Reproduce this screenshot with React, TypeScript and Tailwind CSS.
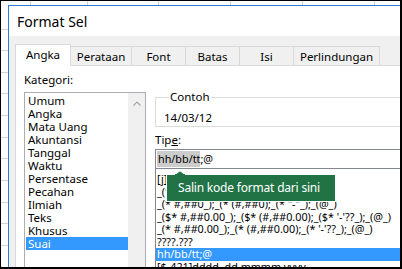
import React from "react";

const categories = [
  "Umum",
  "Angka",
  "Mata Uang",
  "Akuntansi",
  "Tanggal",
  "Waktu",
  "Persentase",
  "Pecahan",
  "Ilmiah",
  "Teks",
  "Khusus",
  "Suai",
];

const formats = [
  "[j]:mm:dd",
  "_(* #,##0_);_(* (#,##0);_(* \"-\"_)",
  "_(* #,##0_);_(* (#,##0);_(* \"-\"_);_(@_)",
  "_($* #,##0.00_);_($* (#,##0.00);_($* '-'??_);_(@_)",
  "_(* #,##0.00_);_(* (#,##0.00);_(* '-'??_);_(@_)",
  "????.???",
  "hh/bb/tt;@",
  "[$-421]dddd, dd mmmm yyyy",
];

const tabs = [
  { label: "Perataan", w: "w-[61px]" },
  { label: "Font", w: "w-[54px]" },
  { label: "Batas", w: "w-[54px]" },
  { label: "Isi", w: "w-[54px]" },
  { label: "Perlindungan", w: "w-[86px]" },
];

function Grid() {
  const vx = [30.5, 87.5, 158.5, 230.5, 302.5, 374.5];
  const hy = [29.5, 50.5, 72.5, 93.5, 115.5, 137.5, 158.5, 180.5, 202.5, 223.5, 245.5, 267.5];
  return (
    <svg className="absolute inset-0" width="402" height="269">
      {vx.map((x) => (
        <line key={"v" + x} x1={x} y1={0} x2={x} y2={269} stroke="#d4d4d4" strokeWidth="1" />
      ))}
      {hy.map((y) => (
        <line key={"h" + y} x1={0} y1={y} x2={402} y2={y} stroke="#d4d4d4" strokeWidth="1" />
      ))}
    </svg>
  );
}

export default function App() {
  return (
    <div className="relative w-[402px] h-[269px] overflow-hidden bg-white font-['Noto_Sans',sans-serif] text-black">
      <Grid />

      {/* Dialog window */}
      <div className="absolute left-[8px] top-[5px] w-[420px] border-l border-t border-[#2d7dd2] bg-[#f0f0f0] flex flex-col">
        <div className="shrink-0 h-[30px] bg-white flex items-center pl-[8px] text-[14px]">Format Sel</div>

        <div className="shrink-0 pt-[8px] pl-[6px]">
          {/* Tabs */}
          <div className="flex items-end h-[22px] text-[11.5px]">
            <div className="relative z-10 w-[56px] h-[22px] bg-white border border-b-0 border-[#d9d9d9] flex items-center justify-center pb-[1px]">
              Angka
            </div>
            {tabs.map((t) => (
              <div
                key={t.label}
                className={`${t.w} h-[20px] border border-l-0 border-b-0 border-[#d9d9d9] bg-[#f0f0f0] flex items-center justify-center`}
              >
                {t.label}
              </div>
            ))}
          </div>

          {/* Panel */}
          <div className="relative -mt-[1px] h-[260px] bg-white border border-[#d9d9d9] flex pl-[8px] gap-[9px]">
            {/* Left column */}
            <div className="shrink-0 flex flex-col w-[122px] text-[11.5px]">
              <div className="mt-[6px] h-[16px] leading-[16px]">
                Kate<span className="underline">g</span>ori:
              </div>
              <div className="mt-[4px] h-[220px] border border-[#abadb3] bg-white flex">
                <div className="flex-1 ml-[1px] pt-[1px]">
                  {categories.map((c) => (
                    <div
                      key={c}
                      className={`h-[13px] leading-[13px] pl-[2px] ${c === "Suai" ? "bg-[#3399ff] text-white" : ""}`}
                    >
                      {c}
                    </div>
                  ))}
                </div>
                <div className="w-[17px] bg-[#f0f0f0] flex justify-center pt-[8px]">
                  <svg width="8" height="5" viewBox="0 0 8 5">
                    <path d="M0.5 4.5 L4 1 L7.5 4.5" fill="none" stroke="#a6a6a6" strokeWidth="1.2" />
                  </svg>
                </div>
              </div>
            </div>

            {/* Right column */}
            <div className="flex-1 flex flex-col text-[11.5px]">
              <fieldset className="mt-[23px] border border-[#dcdcdc] pl-[8px]">
                <legend className="ml-[5px] px-[1px] leading-[16px]">Contoh</legend>
                <div className="mt-[5px] h-[16px] leading-[16px]">14/03/12</div>
              </fieldset>
              <div className="mt-[5px] h-[16px] leading-[16px]">
                Tip<span className="underline">e</span>:
              </div>
              <div className="mt-[1px] h-[20px] border border-[#828790] flex items-center pl-[1px] text-[10.8px]">
                <span className="bg-[#cccccc] pl-[1px]">hh/bb/tt</span>
                <span>;@</span>
              </div>
              <div className="h-[120px] border-l border-[#828790] pt-[4px] text-[10.8px] whitespace-nowrap">
                {formats.map((f) => (
                  <div
                    key={f}
                    className={`h-[12.5px] leading-[12.5px] pl-[1px] ${f === "hh/bb/tt;@" ? "bg-[#3399ff] text-white" : ""}`}
                  >
                    {f}
                  </div>
                ))}
              </div>
            </div>
          </div>
        </div>
      </div>

      {/* Tooltip */}
      <svg className="absolute left-[173px] top-[170px]" width="14" height="6" viewBox="0 0 14 6">
        <path d="M0.5 5.5 L7 0.8 L13.5 5.5 Z" fill="#217346" stroke="#ffffff" strokeWidth="1" />
      </svg>
      <div className="absolute left-[166px] top-[174px] w-[170px] h-[28px] bg-[#217346] border border-white text-white text-[12px] tracking-[-0.2px] flex items-center pl-[11px] whitespace-nowrap">
        Salin kode format dari sini
      </div>
      <div className="absolute left-[175px] top-[174px] w-[10px] h-[2px] bg-[#217346]" />

      {/* Outer frame */}
      <div className="absolute inset-0 border-l border-t border-r-2 border-b-2 border-black pointer-events-none" />
    </div>
  );
}
